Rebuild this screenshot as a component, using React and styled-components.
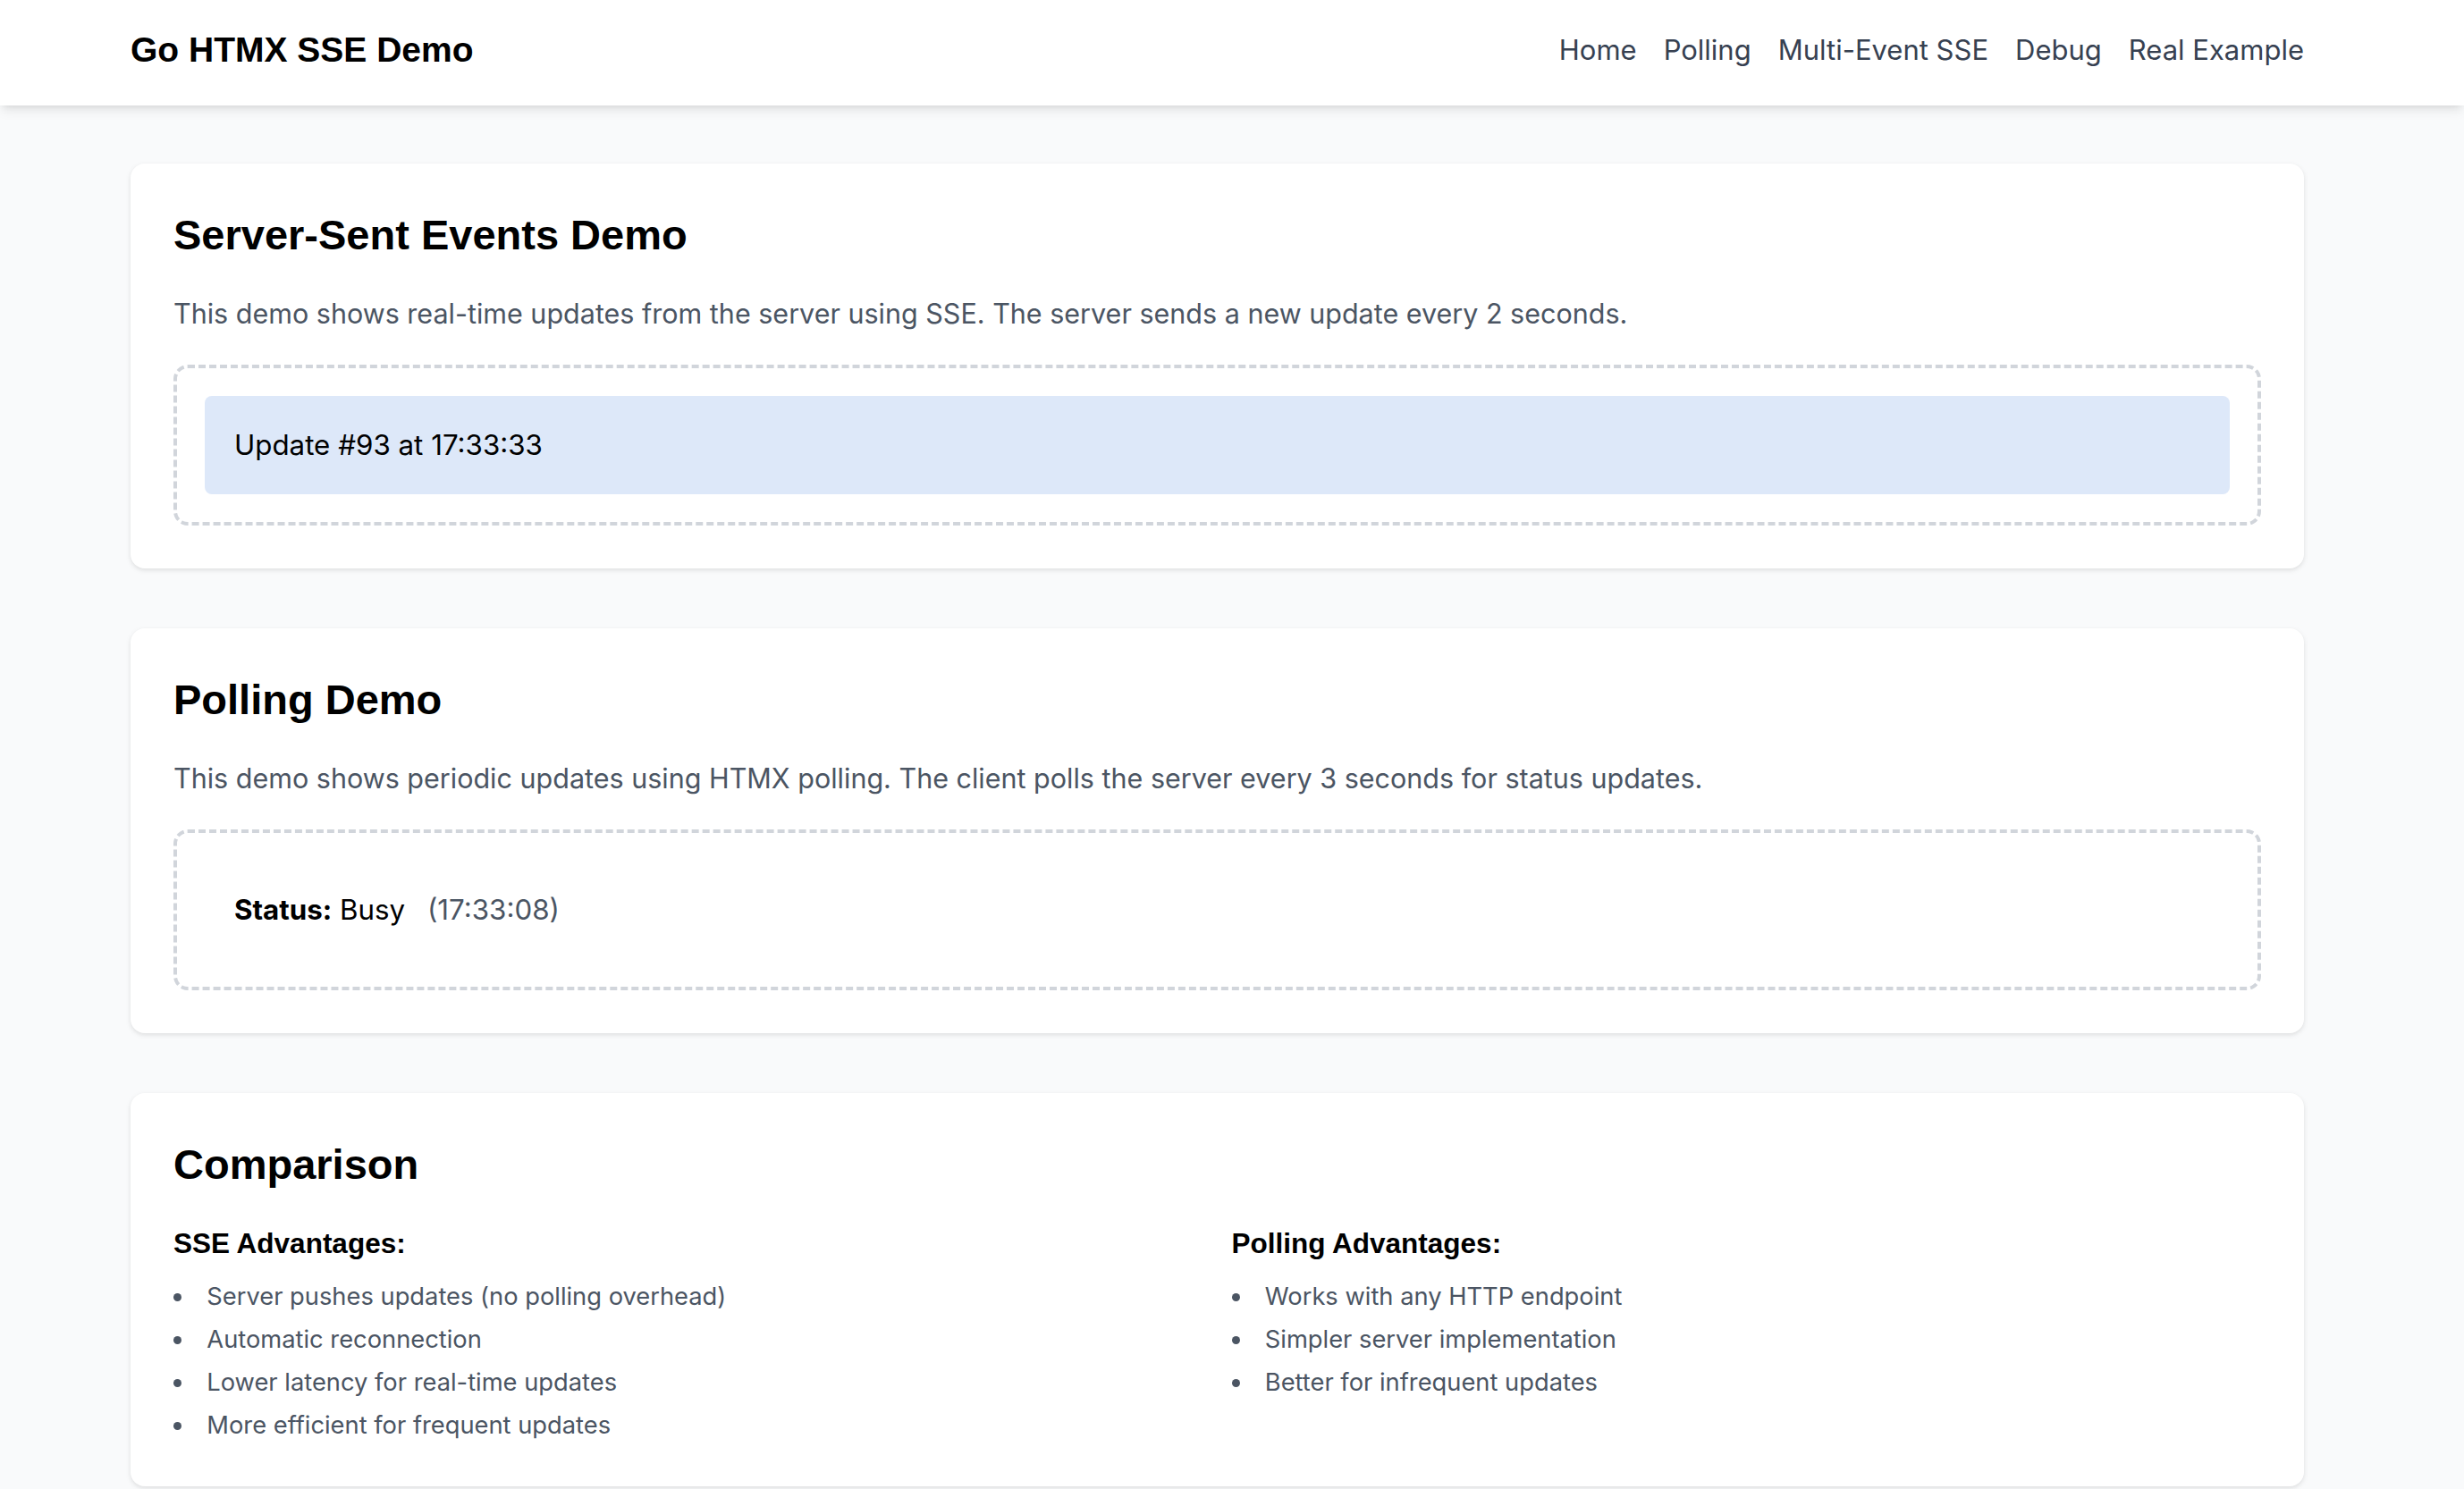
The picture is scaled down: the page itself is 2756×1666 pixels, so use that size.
import styled, { createGlobalStyle } from "styled-components";

const GlobalStyle = createGlobalStyle`
  body {
    margin: 0;
    background: #f9fafb;
    font-family: Inter, "Noto Sans", sans-serif;
    color: #000;
  }
`;

const navLinks = ["Home", "Polling", "Multi-Event SSE", "Debug", "Real Example"];

const sseAdvantages = [
  "Server pushes updates (no polling overhead)",
  "Automatic reconnection",
  "Lower latency for real-time updates",
  "More efficient for frequent updates",
];

const pollingAdvantages = [
  "Works with any HTTP endpoint",
  "Simpler server implementation",
  "Better for infrequent updates",
];

function App() {
  return (
    <>
      <GlobalStyle />
      <Header>
        <HeaderInner>
          <Logo>Go HTMX SSE Demo</Logo>
          <Nav>
            {navLinks.map((link) => (
              <NavLink key={link} href="#">
                {link}
              </NavLink>
            ))}
          </Nav>
        </HeaderInner>
      </Header>

      <Main>
        <Card>
          <CardTitle>Server-Sent Events Demo</CardTitle>
          <Description>
            This demo shows real-time updates from the server using SSE. The
            server sends a new update every 2 seconds.
          </Description>
          <DashedBox>
            <UpdateItem $highlight>Update #93 at 17:33:33</UpdateItem>
          </DashedBox>
        </Card>

        <Card>
          <CardTitle>Polling Demo</CardTitle>
          <Description>
            This demo shows periodic updates using HTMX polling. The client
            polls the server every 3 seconds for status updates.
          </Description>
          <DashedBox>
            <UpdateItem>
              <strong>Status:</strong> Busy <Time>(17:33:08)</Time>
            </UpdateItem>
          </DashedBox>
        </Card>

        <Card>
          <CardTitle>Comparison</CardTitle>
          <Columns>
            <div>
              <SubTitle>SSE Advantages:</SubTitle>
              <List>
                {sseAdvantages.map((item) => (
                  <ListItem key={item}>{item}</ListItem>
                ))}
              </List>
            </div>
            <div>
              <SubTitle>Polling Advantages:</SubTitle>
              <List>
                {pollingAdvantages.map((item) => (
                  <ListItem key={item}>{item}</ListItem>
                ))}
              </List>
            </div>
          </Columns>
        </Card>
      </Main>
    </>
  );
}

export default App;

const Header = styled.header`
  background: #fff;
  box-shadow: 0 8px 12px -2px rgba(0, 0, 0, 0.08),
    0 4px 8px -4px rgba(0, 0, 0, 0.1);
`;

const HeaderInner = styled.div`
  width: 2431px;
  margin-left: 146px;
  padding: 28px 0 34px;
  display: flex;
  justify-content: space-between;
  align-items: center;
`;

const Logo = styled.div`
  font-family: "Liberation Sans", Arial, sans-serif;
  font-weight: 700;
  font-size: 39px;
  line-height: 56px;
`;

const Nav = styled.nav`
  display: flex;
  gap: 30px;
`;

const NavLink = styled.a`
  font-size: 31px;
  line-height: 48px;
  color: #374151;
  text-decoration: none;
`;

const Main = styled.main`
  width: 2431px;
  margin-left: 146px;
  padding-top: 65px;
`;

const Card = styled.section`
  background: #fff;
  border-radius: 16px;
  box-shadow: 0 2px 6px rgba(0, 0, 0, 0.08), 0 2px 4px rgba(0, 0, 0, 0.04);
  padding: 48px;
  margin-bottom: 67px;
`;

const CardTitle = styled.h2`
  font-family: "Liberation Sans", Arial, sans-serif;
  font-weight: 700;
  font-size: 47px;
  line-height: 64px;
  margin: 0 0 32px;
`;

const Description = styled.p`
  font-size: 30.5px;
  line-height: 48px;
  color: #4b5563;
  margin: 0 0 33px;
`;

const DashedBox = styled.div`
  border: 4px dashed #d1d5db;
  border-radius: 16px;
  padding: 31px;
`;

const UpdateItem = styled.div`
  background: ${({ $highlight }) => ($highlight ? "#dde8f9" : "transparent")};
  border-radius: 8px;
  padding: 32px 33px 31px;
  font-size: 31.3px;
  line-height: 47px;
  color: #000;

  strong {
    font-weight: 700;
  }
`;

const Time = styled.span`
  color: #4b5563;
  margin-left: 16px;
`;

const Columns = styled.div`
  display: grid;
  grid-template-columns: 1fr 1fr;
  gap: 32px;
`;

const SubTitle = styled.h3`
  font-family: "Liberation Sans", Arial, sans-serif;
  font-weight: 700;
  font-size: 31.5px;
  line-height: 48px;
  margin: 0 0 16px;
`;

const List = styled.ul`
  list-style: disc inside;
  margin: 0;
  padding: 0;
`;

const ListItem = styled.li`
  font-size: 27.3px;
  line-height: 40px;
  color: #4b5563;

  & + & {
    margin-top: 8px;
  }
`;
